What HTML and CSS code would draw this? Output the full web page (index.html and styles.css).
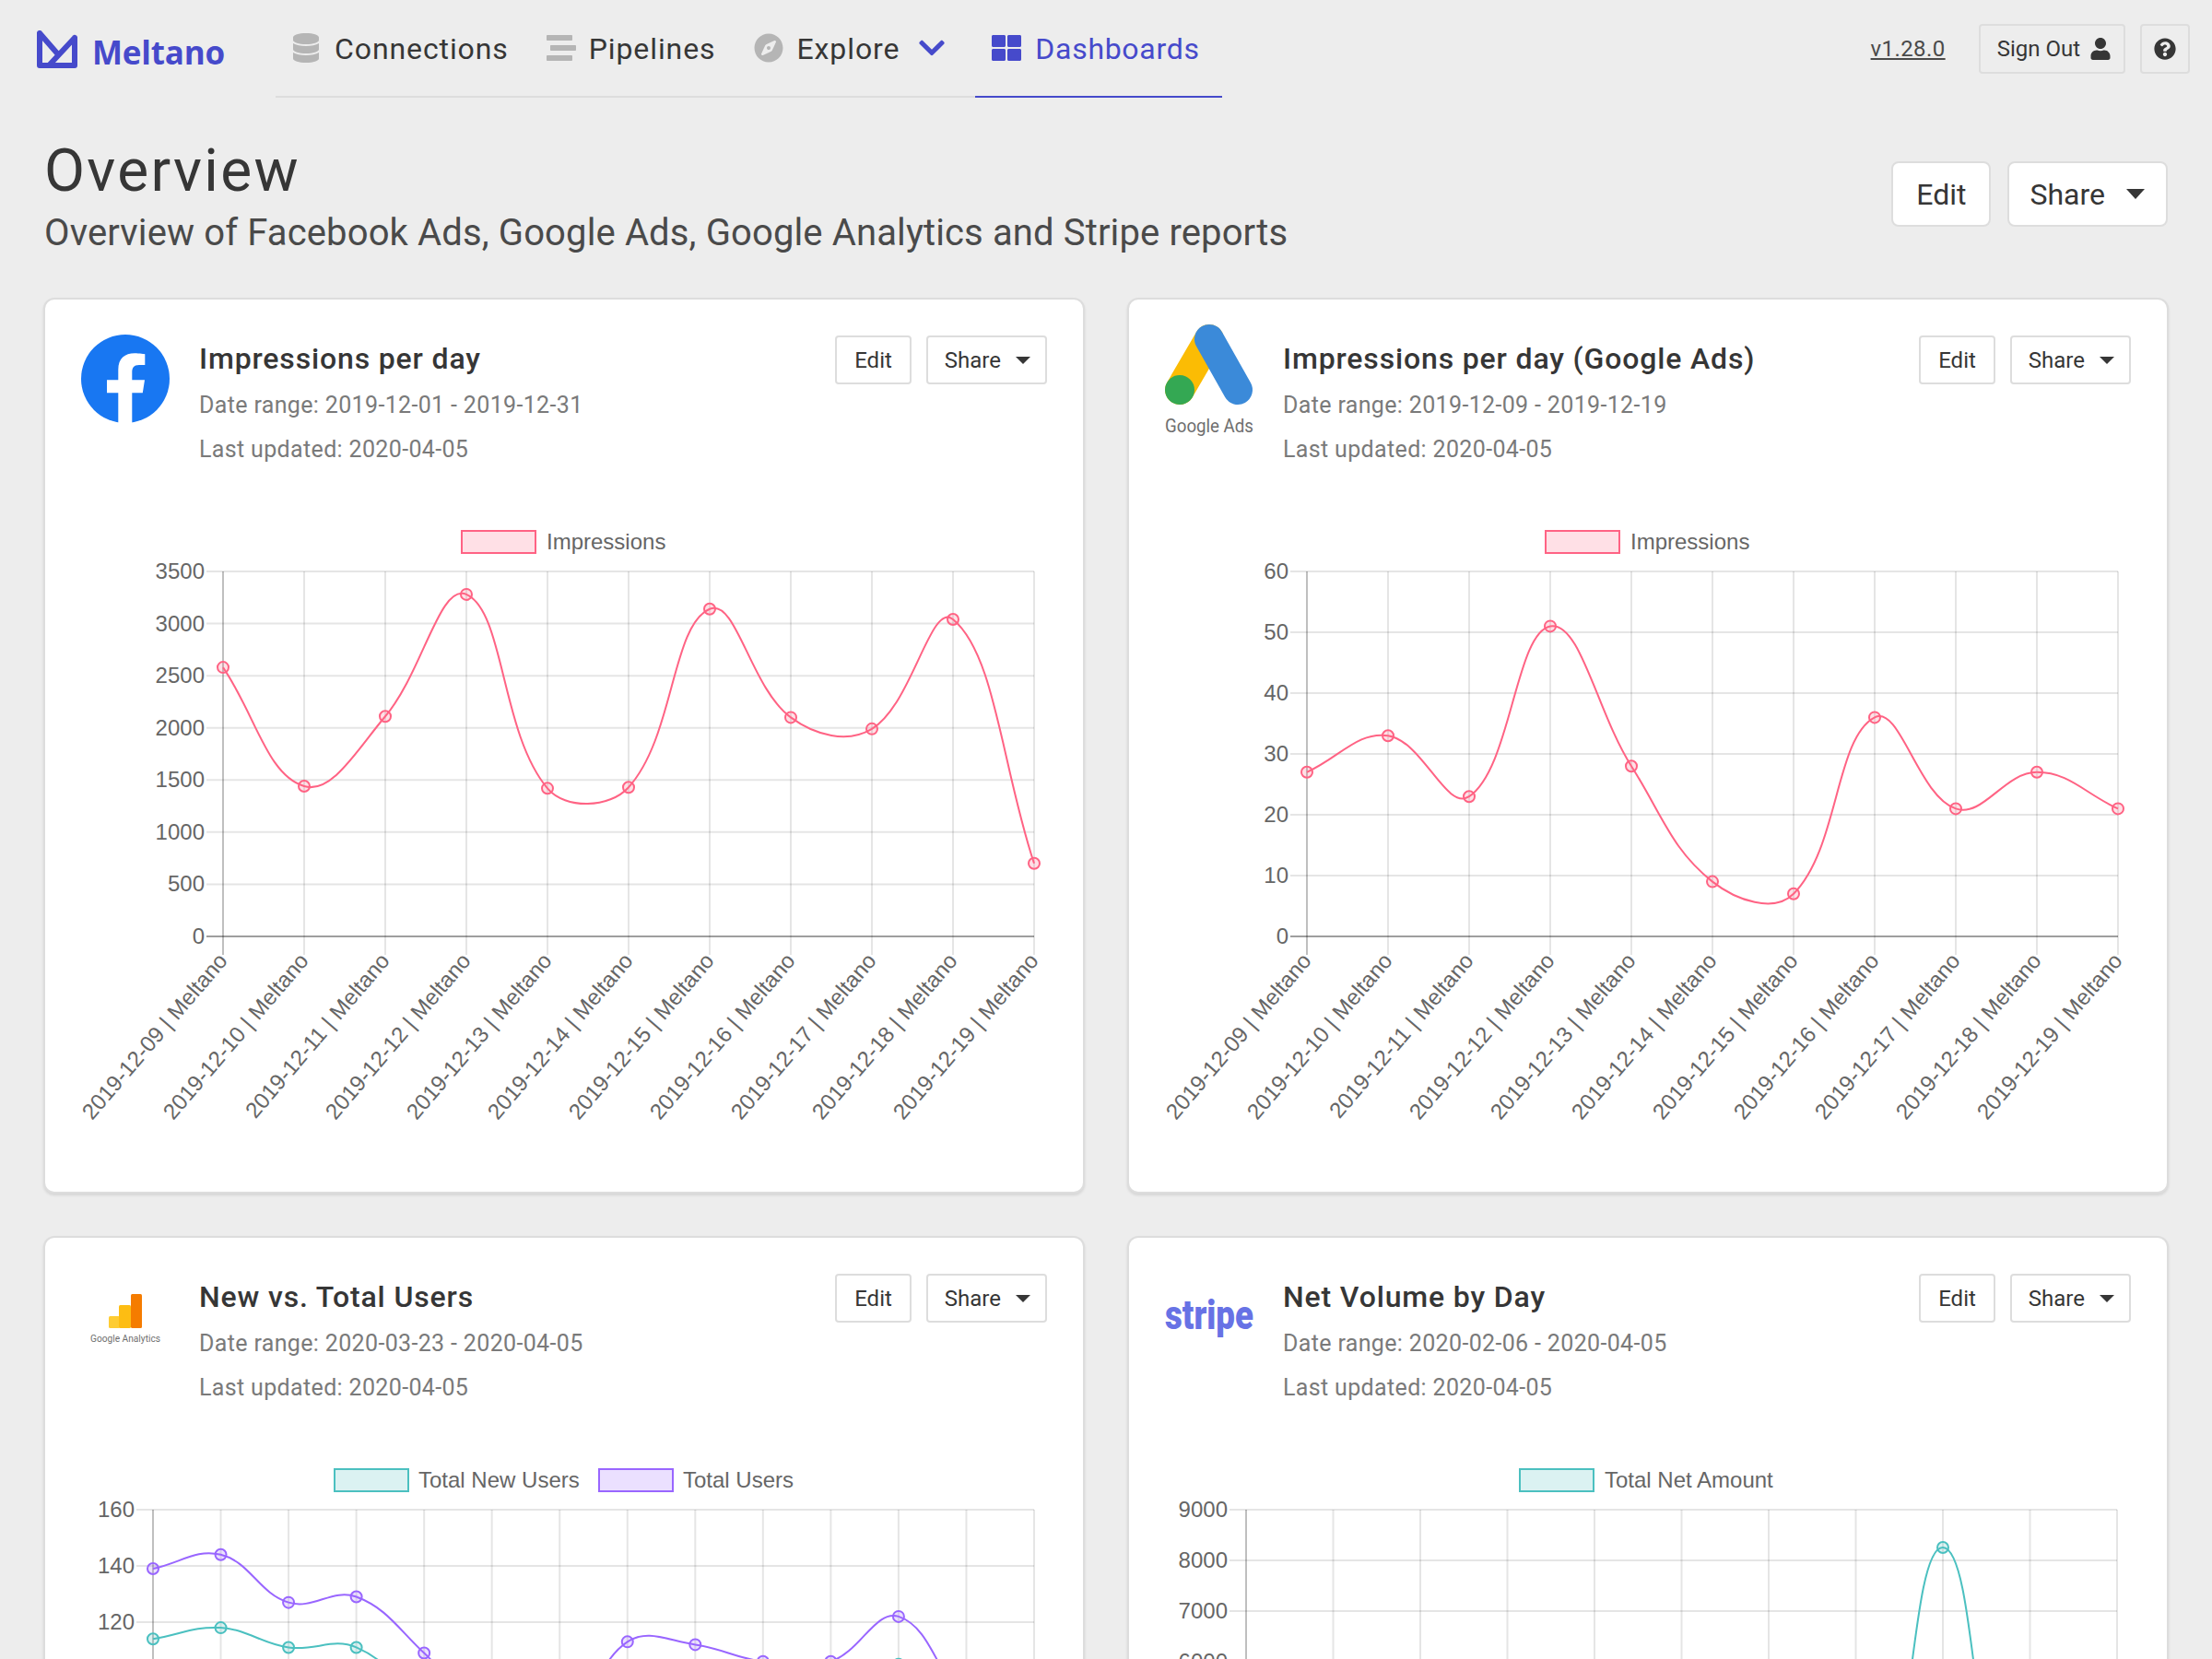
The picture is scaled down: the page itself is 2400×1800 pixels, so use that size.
FILE: index.html
```html
<!DOCTYPE html>
<html lang="en">
<head>
    <meta charset="UTF-8">
    <meta name="viewport" content="width=device-width, initial-scale=1.0">
    <title>Meltano - Overview</title>
    <link rel="stylesheet" href="styles.css">
</head>
<body>
    <nav class="navbar">
        <a class="brand" href="#">
            <svg class="brand-logo" viewBox="0 0 44 41">
                <path d="M3 3 L23 26 M41 8 L14 37 M3 3 V38 H41 V8" fill="none" stroke="#464acb" stroke-width="6" stroke-linejoin="round" stroke-linecap="round"/>
            </svg>
            <span class="brand-name">Meltano</span>
        </a>
        <ul class="tabs">
            <li class="tab tab-connections">
                <svg class="icon icon-muted" viewBox="0 0 448 512"><path d="M448 73.143v45.714C448 159.143 347.667 192 224 192S0 159.143 0 118.857V73.143C0 32.857 100.333 0 224 0s224 32.857 224 73.143zM448 176v102.857C448 319.143 347.667 352 224 352S0 319.143 0 278.857V176c48.125 33.143 136.208 48.572 224 48.572S399.874 209.143 448 176zm0 160v102.857C448 479.143 347.667 512 224 512S0 479.143 0 438.857V336c48.125 33.143 136.208 48.572 224 48.572S399.874 369.143 448 336z"/></svg>
                <span class="tab-label">Connections</span>
            </li>
            <li class="tab tab-pipelines">
                <svg class="icon icon-muted" viewBox="0 0 512 512"><path d="M16 128h416c8.84 0 16-7.16 16-16V48c0-8.84-7.16-16-16-16H16C7.16 32 0 39.16 0 48v64c0 8.84 7.16 16 16 16zm480 80H80c-8.84 0-16 7.16-16 16v64c0 8.84 7.16 16 16 16h416c8.84 0 16-7.16 16-16v-64c0-8.84-7.16-16-16-16zm-64 176H16c-8.84 0-16 7.16-16 16v64c0 8.84 7.16 16 16 16h416c8.84 0 16-7.16 16-16v-64c0-8.84-7.16-16-16-16z"/></svg>
                <span class="tab-label">Pipelines</span>
            </li>
            <li class="tab tab-explore">
                <svg class="icon icon-muted" viewBox="0 0 496 512"><path d="M225.38 233.37c-12.5 12.5-12.5 32.76 0 45.25 12.49 12.5 32.76 12.5 45.25 0 12.5-12.5 12.5-32.76 0-45.25-12.5-12.49-32.76-12.49-45.25 0zM248 8C111.03 8 0 119.03 0 256s111.03 248 248 248 248-111.03 248-248S384.97 8 248 8zm126.14 148.05L308.17 300.4a31.938 31.938 0 0 1-15.77 15.77l-144.34 65.97c-16.65 7.61-33.81-9.55-26.2-26.2l65.98-144.35a31.938 31.938 0 0 1 15.77-15.77l144.34-65.97c16.65-7.6 33.8 9.55 26.19 26.2z"/></svg>
                <span class="tab-label">Explore</span>
                <svg class="icon icon-chevron" viewBox="0 0 448 512"><path d="M207.029 381.476L12.686 187.132c-9.373-9.373-9.373-24.569 0-33.941l22.667-22.667c9.357-9.357 24.522-9.375 33.901-.04L224 284.505l154.745-154.021c9.379-9.335 24.544-9.317 33.901.04l22.667 22.667c9.373 9.373 9.373 24.569 0 33.941L240.971 381.476c-9.373 9.372-24.569 9.372-33.942 0z"/></svg>
            </li>
            <li class="tab tab-active">
                <svg class="icon icon-primary" viewBox="0 0 512 512"><path d="M296 32h192c13.255 0 24 10.745 24 24v160c0 13.255-10.745 24-24 24H296c-13.255 0-24-10.745-24-24V56c0-13.255 10.745-24 24-24zm-80 0H24C10.745 32 0 42.745 0 56v160c0 13.255 10.745 24 24 24h192c13.255 0 24-10.745 24-24V56c0-13.255-10.745-24-24-24zM0 296v160c0 13.255 10.745 24 24 24h192c13.255 0 24-10.745 24-24V296c0-13.255-10.745-24-24-24H24c-13.255 0-24 10.745-24 24zm296 184h192c13.255 0 24-10.745 24-24V296c0-13.255-10.745-24-24-24H296c-13.255 0-24 10.745-24 24v160c0 13.255 10.745 24 24 24z"/></svg>
                <span class="tab-label">Dashboards</span>
            </li>
        </ul>
        <div class="nav-end">
            <a class="version" href="#">v1.28.0</a>
            <button class="button-nav">
                Sign Out
                <svg class="icon-small" viewBox="0 0 448 512"><path d="M224 256c70.7 0 128-57.3 128-128S294.7 0 224 0 96 57.3 96 128s57.3 128 128 128zm89.6 32h-16.7c-22.2 10.2-46.9 16-72.9 16s-50.6-5.8-72.9-16h-16.7C60.2 288 0 348.2 0 422.4V464c0 26.5 21.5 48 48 48h352c26.5 0 48-21.5 48-48v-41.6c0-74.2-60.2-134.4-134.4-134.4z"/></svg>
            </button>
            <button class="button-nav button-help">
                <svg class="icon-small" viewBox="0 0 512 512"><path d="M504 256c0 136.997-111.043 248-248 248S8 392.997 8 256C8 119.083 119.043 8 256 8s248 111.083 248 248zM262.655 90c-54.497 0-89.255 22.957-116.549 63.758-3.536 5.286-2.353 12.415 2.715 16.258l34.699 26.31c5.205 3.947 12.621 3.008 16.665-2.122 17.864-22.658 30.113-35.797 57.303-35.797 20.429 0 45.698 13.148 45.698 32.958 0 14.976-12.363 22.667-32.534 33.976C247.128 238.528 216 254.941 216 296v4c0 6.627 5.373 12 12 12h56c6.627 0 12-5.373 12-12v-1.333c0-28.462 83.186-29.647 83.186-106.667 0-58.002-60.165-102-116.531-102zM256 338c-25.365 0-46 20.635-46 46 0 25.364 20.635 46 46 46s46-20.636 46-46c0-25.365-20.635-46-46-46z"/></svg>
            </button>
        </div>
    </nav>

    <header class="page-header">
        <div>
            <h1 class="title">Overview</h1>
            <h2 class="subtitle">Overview of Facebook Ads, Google Ads, Google Analytics and Stripe reports</h2>
        </div>
        <div class="actions actions-large">
            <button class="button">Edit</button>
            <button class="button button-share">Share <span class="caret"></span></button>
        </div>
    </header>

    <main class="reports">
        <section class="card">
            <div class="card-header">
                <svg class="report-logo" viewBox="0 0 97 112">
                    <circle cx="48" cy="47" r="48" fill="#1877f2"/>
                    <path d="M40.3 95 V62.3 H28 V48.3 H40.3 V37 C40.3 25 47.5 19.3 58 19.3 C63 19.3 69.3 20.3 69.3 20.3 V32 H63 C57 32 55.3 35.5 55.3 39.5 V48.3 H69 L66.8 62.3 H55.3 V95 Z" fill="#fff"/>
                </svg>
                <div class="report-info">
                    <h3 class="report-title">Impressions per day</h3>
                    <p class="report-meta">Date range: 2019-12-01 - 2019-12-31</p>
                    <p class="report-meta">Last updated: 2020-04-05</p>
                </div>
                <div class="actions">
                    <button class="button button-small">Edit</button>
                    <button class="button button-small button-share">Share <span class="caret caret-small"></span></button>
                </div>
            </div>
            <svg class="chart" id="chartFacebook" viewBox="0 0 1048 694"></svg>
        </section>

        <section class="card">
            <div class="card-header">
                <svg class="report-logo" viewBox="0 0 97 112">
                    <line x1="48" y1="4" x2="16" y2="59" stroke="#fbbc04" stroke-width="32" stroke-linecap="round"/>
                    <circle cx="16" cy="59" r="16" fill="#34a853"/>
                    <line x1="48" y1="4" x2="79" y2="59" stroke="#3b8ad9" stroke-width="32" stroke-linecap="round"/>
                    <text class="logo-text" x="48" y="105" text-anchor="middle" textLength="96" lengthAdjust="spacingAndGlyphs">Google Ads</text>
                </svg>
                <div class="report-info">
                    <h3 class="report-title">Impressions per day (Google Ads)</h3>
                    <p class="report-meta">Date range: 2019-12-09 - 2019-12-19</p>
                    <p class="report-meta">Last updated: 2020-04-05</p>
                </div>
                <div class="actions">
                    <button class="button button-small">Edit</button>
                    <button class="button button-small button-share">Share <span class="caret caret-small"></span></button>
                </div>
            </div>
            <svg class="chart" id="chartGoogleAds" viewBox="0 0 1048 694"></svg>
        </section>

        <section class="card">
            <div class="card-header">
                <svg class="report-logo" viewBox="0 0 97 112">
                    <rect x="30" y="46" width="12" height="13" rx="1.5" fill="#fecc33"/>
                    <rect x="41" y="34" width="13" height="25" rx="1.5" fill="#fdbd13"/>
                    <rect x="54" y="22" width="12" height="37" rx="1.5" fill="#f57c00"/>
                    <text class="logo-text logo-text-tiny" x="48" y="74" text-anchor="middle" textLength="76" lengthAdjust="spacingAndGlyphs">Google Analytics</text>
                </svg>
                <div class="report-info">
                    <h3 class="report-title">New vs. Total Users</h3>
                    <p class="report-meta">Date range: 2020-03-23 - 2020-04-05</p>
                    <p class="report-meta">Last updated: 2020-04-05</p>
                </div>
                <div class="actions">
                    <button class="button button-small">Edit</button>
                    <button class="button button-small button-share">Share <span class="caret caret-small"></span></button>
                </div>
            </div>
            <svg class="chart" id="chartAnalytics" viewBox="0 0 1048 694"></svg>
        </section>

        <section class="card">
            <div class="card-header">
                <svg class="report-logo" viewBox="0 0 97 112">
                    <text class="logo-stripe" x="0" y="60" textLength="96" lengthAdjust="spacingAndGlyphs">stripe</text>
                </svg>
                <div class="report-info">
                    <h3 class="report-title">Net Volume by Day</h3>
                    <p class="report-meta">Date range: 2020-02-06 - 2020-04-05</p>
                    <p class="report-meta">Last updated: 2020-04-05</p>
                </div>
                <div class="actions">
                    <button class="button button-small">Edit</button>
                    <button class="button button-small button-share">Share <span class="caret caret-small"></span></button>
                </div>
            </div>
            <svg class="chart" id="chartStripe" viewBox="0 0 1048 694"></svg>
        </section>
    </main>

    <script src="charts.js"></script>
</body>
</html>
```

FILE: styles.css
```css
html, body {
    height: 100%;
    overflow: hidden;
}

body {
    margin: 0;
    background-color: #ededed;
    color: #363636;
    font-family: Roboto, "Noto Sans", sans-serif;
}

h1, h2, h3, p, ul {
    margin: 0;
    padding: 0;
}

button {
    font-family: inherit;
    cursor: pointer;
}

/* navbar */
.navbar {
    display: flex;
    align-items: flex-start;
    height: 107px;
}

.brand {
    display: flex;
    align-items: center;
    gap: 16px;
    width: 299px;
    height: 106px;
    padding-left: 40px;
    box-sizing: border-box;
    text-decoration: none;
}

.brand-logo {
    width: 44px;
    height: 41px;
}

.brand-name {
    margin-top: 6px;
    color: #464acb;
    font-family: "Open Sans", sans-serif;
    font-size: 35px;
    font-weight: 700;
    letter-spacing: -0.2px;
}

.tabs {
    display: flex;
    list-style: none;
}

.tab {
    display: flex;
    align-items: center;
    gap: 14px;
    height: 104px;
    padding: 0 21px;
    border-bottom: 2px solid #dddddd;
    font-size: 32px;
}

.tab-label {
    margin-top: 2px;
    letter-spacing: 0.9px;
}

.tab-connections {
    gap: 17px;
    padding-left: 19px;
}

.tab-pipelines {
    padding-left: 20px;
}

.tab-explore {
    padding-right: 33px;
}

.tab-active {
    gap: 15px;
    padding: 0 24px 0 18px;
    border-bottom-color: #464acb;
    color: #464acb;
}

.tab-active .tab-label {
    letter-spacing: 0.7px;
}

.icon {
    width: 32px;
    height: 32px;
}

.tab-connections .icon {
    width: 28px;
}

.icon-muted {
    fill: #b5b5b5;
}

.icon-primary,
.icon-chevron {
    fill: #464acb;
}

.icon-chevron {
    width: 28px;
    margin-left: 7px;
}

.nav-end {
    display: flex;
    align-items: center;
    gap: 16px;
    margin-left: auto;
    margin-top: 26px;
    padding-right: 24px;
}

.version {
    margin-right: 20px;
    color: #4a4a4a;
    font-size: 24px;
    letter-spacing: 0.4px;
}

.button-nav {
    display: flex;
    align-items: center;
    gap: 10px;
    height: 54px;
    padding: 0 13px 0 18px;
    background: transparent;
    border: 2px solid #dddddd;
    border-radius: 4px;
    color: #363636;
    font-size: 24px;
}

.icon-small {
    width: 24px;
    height: 24px;
    fill: #363636;
}

.button-help {
    width: 54px;
    padding: 0;
    justify-content: center;
}

/* page title */
.page-header {
    display: flex;
    justify-content: space-between;
    padding: 43px 48px 0;
    height: 216px;
    box-sizing: border-box;
}

.title {
    font-size: 64px;
    font-weight: 400;
    line-height: 72px;
    letter-spacing: 2.3px;
}

.subtitle {
    margin-top: 6px;
    color: #4a4a4a;
    font-size: 40px;
    font-weight: 400;
    line-height: 50px;
    letter-spacing: 0.13px;
}

.actions {
    display: flex;
    gap: 18px;
}

.actions-large {
    margin-top: 25px;
}

.button {
    display: flex;
    align-items: center;
    justify-content: center;
    height: 71px;
    padding: 0 25px;
    background-color: #ffffff;
    border: 2px solid #dddddd;
    border-radius: 8px;
    color: #363636;
    font-size: 32px;
}

.button-share {
    gap: 23px;
    padding: 0 23px 0 22px;
}

.button-small {
    height: 53px;
    padding: 0 19px;
    border-radius: 4px;
    font-size: 24px;
}

.button-small.button-share {
    gap: 16px;
    padding: 0 16px 0 18px;
}

.caret {
    width: 0;
    height: 0;
    border-left: 10px solid transparent;
    border-right: 10px solid transparent;
    border-top: 11px solid #363636;
}

.caret-small {
    border-left-width: 8px;
    border-right-width: 8px;
    border-top-width: 8px;
}

/* report cards */
.reports {
    display: grid;
    grid-template-columns: 1130px 1130px;
    gap: 46px;
    padding: 0 47px;
}

.card {
    height: 972px;
    padding: 39px;
    box-sizing: border-box;
    background-color: #ffffff;
    border: 2px solid #dddddd;
    border-radius: 12px;
    box-shadow: 0 2px 3px rgba(10, 10, 10, 0.1);
}

.card-header {
    display: flex;
    height: 148px;
}

.report-logo {
    flex: none;
    width: 97px;
    height: 112px;
    overflow: visible;
}

.logo-text {
    fill: #6f6f6f;
    font-family: Roboto, sans-serif;
    font-size: 20px;
}

.logo-text-tiny {
    font-size: 10.5px;
}

.logo-stripe {
    fill: #6772e5;
    font-family: Roboto, sans-serif;
    font-size: 45px;
    font-weight: 900;
}

.report-info {
    flex: 1;
    margin-left: 31px;
    padding-top: 5px;
}

.report-title {
    font-size: 32px;
    font-weight: 500;
    line-height: 40px;
    margin-bottom: 13px;
    letter-spacing: 0.85px;
}

.report-meta {
    margin-bottom: 12px;
    color: #7a7a7a;
    font-size: 25px;
    line-height: 36px;
    letter-spacing: 0.35px;
}

.card-header .actions {
    gap: 16px;
}

.chart {
    display: block;
    width: 1048px;
    height: 694px;
    margin-top: 48px;
}

.chart text {
    fill: #666666;
    font-family: "Liberation Sans", Arial, sans-serif;
    font-size: 24px;
}

.grid-line {
    stroke: rgba(0, 0, 0, 0.1);
    stroke-width: 2;
}

.zero-line {
    stroke: rgba(0, 0, 0, 0.25);
    stroke-width: 2;
}

.base-line {
    stroke: rgba(0, 0, 0, 0.38);
    stroke-width: 2;
}
```

FILE: charts.js
```js
var PINK = { line: "rgb(255,99,132)", fill: "rgba(255,99,132,0.2)" };
var TEAL = { line: "rgb(75,192,192)", fill: "rgba(75,192,192,0.2)" };
var PURPLE = { line: "rgb(153,102,255)", fill: "rgba(153,102,255,0.2)" };

function dateLabels(dates, suffix) {
    return dates.map(function (d) { return d + suffix; });
}

var decemberDays = ["2019-12-09", "2019-12-10", "2019-12-11", "2019-12-12", "2019-12-13", "2019-12-14",
    "2019-12-15", "2019-12-16", "2019-12-17", "2019-12-18", "2019-12-19"];

var charts = [
    {
        id: "chartFacebook", left: 154, right: 1034, top: 60, bottom: 456, max: 3500, step: 500,
        labels: dateLabels(decemberDays, " | Meltano"),
        legend: [{ box: 412, text: 505, label: "Impressions", color: PINK }],
        data: [{ color: PINK, values: [2580, 1440, 2110, 3280, 1420, 1430, 3140, 2100, 1990, 3040, 700] }]
    },
    {
        id: "chartGoogleAds", left: 154, right: 1034, top: 60, bottom: 456, max: 60, step: 10,
        labels: dateLabels(decemberDays, " | Meltano"),
        legend: [{ box: 412, text: 505, label: "Impressions", color: PINK }],
        data: [{ color: PINK, values: [27, 33, 23, 51, 28, 9, 7, 36, 21, 27, 21] }]
    },
    {
        id: "chartAnalytics", left: 78, right: 1034, top: 60, bottom: 548, max: 160, step: 20,
        labels: ["2020-03-23", "2020-03-24", "2020-03-25", "2020-03-26", "2020-03-27", "2020-03-28", "2020-03-29",
            "2020-03-30", "2020-03-31", "2020-04-01", "2020-04-02", "2020-04-03", "2020-04-04", "2020-04-05"],
        legend: [
            { box: 274, text: 366, label: "Total New Users", color: TEAL },
            { box: 561, text: 653, label: "Total Users", color: PURPLE }
        ],
        data: [
            { color: TEAL, values: [114, 118, 111, 111, 90, 62, 58, 85, 84, 82, 84, 105, 60, 48] },
            { color: PURPLE, values: [139, 144, 127, 129, 109, 84, 80, 113, 112, 106, 106, 122, 90, 66] }
        ]
    },
    {
        id: "chartStripe", left: 88, right: 1033, top: 60, bottom: 555, max: 9000, step: 1000,
        labels: ["2020-02-06", "2020-02-12", "2020-02-18", "2020-02-24", "2020-03-01", "2020-03-07",
            "2020-03-13", "2020-03-19", "2020-03-25", "2020-03-31", "2020-04-05"],
        legend: [{ box: 384, text: 477, label: "Total Net Amount", color: TEAL }],
        data: [{ color: TEAL, values: [2100, 1500, 2400, 1800, 2600, 1900, 1400, 600, 8255, 500, 900] }]
    }
];

// same spline Chart.js draws with lineTension 0.4
function splinePath(pts) {
    var d = "M" + pts[0].x + " " + pts[0].y;
    var cps = pts.map(function (p, i) {
        var prev = pts[i - 1] || p;
        var next = pts[i + 1] || p;
        var d01 = Math.hypot(p.x - prev.x, p.y - prev.y);
        var d12 = Math.hypot(next.x - p.x, next.y - p.y);
        var s01 = d01 / (d01 + d12);
        var s12 = d12 / (d01 + d12);
        return {
            inX: p.x - 0.4 * s01 * (next.x - prev.x),
            inY: p.y - 0.4 * s01 * (next.y - prev.y),
            outX: p.x + 0.4 * s12 * (next.x - prev.x),
            outY: p.y + 0.4 * s12 * (next.y - prev.y)
        };
    });
    for (var i = 1; i < pts.length; i++) {
        d += " C" + cps[i - 1].outX + " " + cps[i - 1].outY + " " + cps[i].inX + " " + cps[i].inY + " " + pts[i].x + " " + pts[i].y;
    }
    return d;
}

function drawChart(c) {
    var out = "";
    var stepX = (c.right - c.left) / (c.labels.length - 1);
    var scaleY = (c.bottom - c.top) / c.max;

    c.legend.forEach(function (l) {
        out += '<rect x="' + (l.box + 1) + '" y="16" width="80" height="24" fill="' + l.color.fill + '" stroke="' + l.color.line + '" stroke-width="2"/>';
        out += '<text x="' + l.text + '" y="36">' + l.label + "</text>";
    });

    for (var v = 0; v <= c.max; v += c.step) {
        var y = c.bottom - v * scaleY;
        out += '<line class="' + (v == 0 ? "base-line" : "grid-line") + '" x1="' + (c.left - 18) + '" x2="' + c.right + '" y1="' + y + '" y2="' + y + '"/>';
        out += '<text x="' + (c.left - 20) + '" y="' + (y + 8) + '" text-anchor="end">' + v + "</text>";
    }

    c.labels.forEach(function (label, i) {
        var x = c.left + i * stepX;
        out += '<line class="' + (i == 0 ? "zero-line" : "grid-line") + '" x1="' + x + '" x2="' + x + '" y1="' + c.top + '" y2="' + (c.bottom + 20) + '"/>';
        var tx = x + 6;
        var ty = c.bottom + 27;
        out += '<text x="' + tx + '" y="' + ty + '" text-anchor="end" transform="rotate(-49.5 ' + tx + " " + ty + ')">' + label + "</text>";
    });

    c.data.forEach(function (set) {
        var pts = set.values.map(function (v, i) {
            return { x: c.left + i * stepX, y: c.bottom - v * scaleY };
        });
        out += '<path d="' + splinePath(pts) + '" fill="none" stroke="' + set.color.line + '" stroke-width="2"/>';
        pts.forEach(function (p) {
            out += '<circle cx="' + p.x + '" cy="' + p.y + '" r="6" fill="' + set.color.fill + '" stroke="' + set.color.line + '" stroke-width="2"/>';
        });
    });

    document.getElementById(c.id).innerHTML = out;
}

charts.forEach(drawChart);
```
